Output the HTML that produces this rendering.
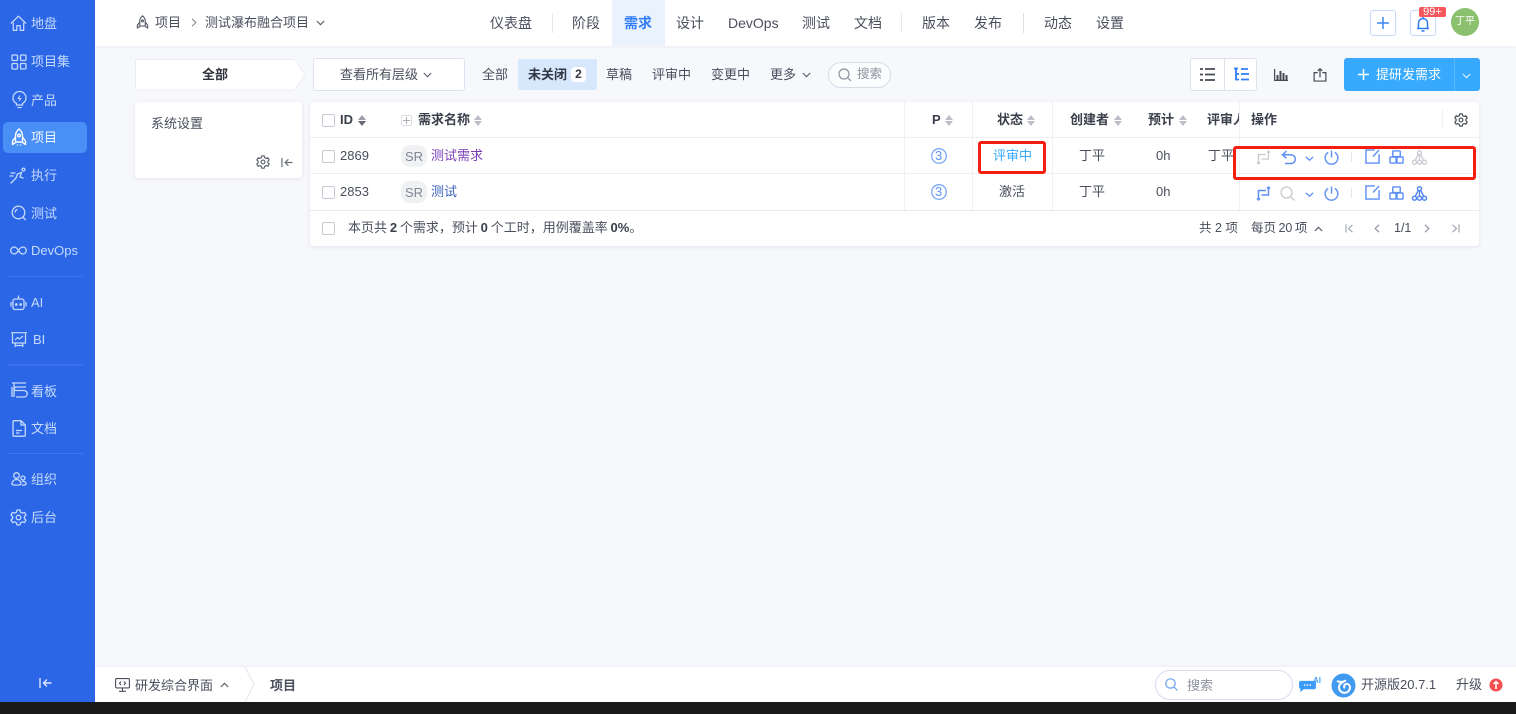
<!DOCTYPE html>
<html lang="zh">
<head>
<meta charset="utf-8">
<title>需求</title>
<style>
html,body{margin:0;padding:0;width:1516px;height:714px;overflow:hidden;background:#f7f8fc}
body{font-family:"Liberation Sans","Noto Sans CJK SC",sans-serif;font-size:13px;color:#4a4f5c}
#w{position:absolute;left:0;top:0;width:1516px;height:714px;overflow:hidden;filter:blur(.3px)}
.a{position:absolute}
.t{position:absolute;white-space:nowrap;line-height:20px;height:20px;margin-top:1px}
.b{font-weight:700;color:#3a3f4b}
.s{color:#c5dafb}
svg{position:absolute;overflow:visible;fill:none}
.cb{position:absolute;width:11px;height:11px;border:1px solid #c6cad3;border-radius:2px;background:#fff}
.sr{position:absolute;width:26px;height:22px;border-radius:9px;background:#f0f1f3;color:#7f8894;text-align:center;line-height:23px;font-size:13px}
.hl{position:absolute;height:1px;background:#eef0f4}
.vl{position:absolute;width:1px;background:#eef0f4}
.sep{position:absolute;height:1px;left:8px;width:75px;background:#4177ea}
.red{position:absolute;border:3px solid #f51c14;border-radius:3px;box-sizing:border-box}
.sort{position:absolute;width:9px;height:11px}
.sort:before,.sort:after{content:"";position:absolute;left:0;border-left:4.5px solid transparent;border-right:4.5px solid transparent}
.sort:before{top:0;border-bottom:5px solid #bcbfc7}
.sort:after{top:6px;border-top:5px solid #bcbfc7}
.sort.d:before{border-bottom-color:#9a9ea8}
.sort.d:after{border-top-color:#666b77}
</style>
</head>
<body>
<div id="w">
<!-- Sidebar -->
<div class="a" style="left:0;top:0;width:95px;height:702px;background:#2b66e6"></div>
<div class="a" style="left:3px;top:122px;width:84px;height:31px;border-radius:5px;background:#4a8ff6"></div>
<div class="sep" style="top:276px"></div><div class="sep" style="top:364px;height:2px;background:#3a71e9"></div><div class="sep" style="top:453px"></div>

<svg style="left:10px;top:15px" width="17" height="17" viewBox="0 0 18 18" stroke="#c5dafb" stroke-width="1.3" stroke-linejoin="round"><path d="M1 9 9 1.300l8 7.700M3.500 8v8.300h3.700v-5h3.600v5h3.700V8"/></svg>
<span class="t s" style="left:31px;top:13px">地盘</span>
<svg style="left:11px;top:54px" width="16" height="16" viewBox="0 0 16 16" stroke="#c5dafb" stroke-width="1.3"><rect x="1" y="1" width="5.500" height="5.500" rx="1"/><rect x="9.500" y="1" width="5.500" height="5.500" rx="1"/><rect x="1" y="9.500" width="5.500" height="5.500" rx="1"/><rect x="9.500" y="9.500" width="5.500" height="5.500" rx="1"/></svg>
<span class="t s" style="left:31px;top:51px">项目集</span>
<svg style="left:12px;top:91px" width="15" height="18" viewBox="0 0 15 18" stroke="#c5dafb" stroke-width="1.3"><path d="M4.500 12.500C2.500 11.300 1 9.500 1 7a6.500 6.500 0 0 1 13 0c0 2.500-1.500 4.300-3.500 5.500v1.500h-6zM5.500 16.500h4"/><path d="M8 4.500 6.200 7.500h2.600L7 10" stroke-width="1"/></svg>
<span class="t s" style="left:31px;top:90px">产品</span>
<svg style="left:11px;top:128px" width="16" height="19" viewBox="0 0 16 19" stroke="#fff" stroke-width="1.4" stroke-linejoin="round"><path d="M8 1c2.500 2 3.500 4.500 3.500 7v6h-7V8c0-2.500 1-5 3.500-7zM4.500 9 1.500 13v3.500l3-2M11.500 9l3 4v3.500l-3-2M6.500 16.500v1M9.500 16.500v1"/><circle cx="8" cy="7.500" r="1.300"/></svg>
<span class="t" style="left:31px;top:127px;color:#f2f6ff">项目</span>
<svg style="left:10px;top:167px" width="17" height="17" viewBox="0 0 17 17" stroke="#c5dafb" stroke-width="1.3"><circle cx="13.500" cy="2.500" r="1.400"/><path d="M1 16 6 11l1.500-4 4-1.500L10 10l3 1M1 6h4M0 9h3" stroke-linecap="round"/></svg>
<span class="t s" style="left:31px;top:165px">执行</span>
<svg style="left:11px;top:205px" width="16" height="16" viewBox="0 0 16 16" stroke="#c5dafb" stroke-width="1.3"><circle cx="7.500" cy="7.500" r="6.300"/><path d="m11.800 12 3 3M4 7.500a3.500 3.500 0 0 1 2.500-3"/></svg>
<span class="t s" style="left:31px;top:203px">测试</span>
<svg style="left:10px;top:246px" width="17" height="9" viewBox="0 0 17 9" stroke="#c5dafb" stroke-width="1.3"><path d="M8.500 4.500C7 2 5.800 1 4.200 1a3.500 3.500 0 0 0 0 7c1.600 0 2.800-1 4.300-3.500C10 2 11.200 1 12.800 1a3.500 3.500 0 0 1 0 7c-1.600 0-2.800-1-4.300-3.500z"/></svg>
<span class="t s" style="left:31px;top:240px">DevOps</span>
<svg style="left:10px;top:294px" width="17" height="17" viewBox="0 0 17 17" stroke="#c5dafb" stroke-width="1.3"><rect x="3" y="5" width="11" height="10.500" rx="2"/><path d="M8.500 5V1.500M1 8v4.500M16 8v4.500"/><circle cx="6.300" cy="10.500" r=".7" fill="#c5dafb"/><circle cx="10.700" cy="10.500" r=".7" fill="#c5dafb"/></svg>
<span class="t s" style="left:31px;top:292px">AI</span>
<svg style="left:11px;top:332px" width="16" height="16" viewBox="0 0 16 16" stroke="#c5dafb" stroke-width="1.2"><path d="M0 .7h16M1.500.7V11h13V.7M4.500 11l-.5 4M11.500 11l.5 4M4 13.500h8M4 8l2.500-2.500 2 1.500L12 4"/></svg>
<span class="t s" style="left:33px;top:329px">BI</span>
<svg style="left:11px;top:382px" width="16" height="16" viewBox="0 0 16 16" stroke="#c5dafb" stroke-width="1.3"><path d="M1 1h14M3 1v14M1 5v10M15 5H5a1.500 1.500 0 0 0 0 3.500h8M13 8.500a2 2 0 0 1 0 6.500H5"/></svg>
<span class="t s" style="left:31px;top:381px">看板</span>
<svg style="left:12px;top:420px" width="14" height="17" viewBox="0 0 14 17" stroke="#c5dafb" stroke-width="1.3"><path d="M1 1.500a.8.800 0 0 1 .8-.8H9l4.300 4.300v10.200a1 1 0 0 1-1 1H1.800a.8.800 0 0 1-.8-.8zM9 .7v4.300h4.300M4 10.500h6M4 13h3.500"/></svg>
<span class="t s" style="left:31px;top:418px">文档</span>
<svg style="left:11px;top:472px" width="16" height="15" viewBox="0 0 16 15" stroke="#c5dafb" stroke-width="1.3"><circle cx="5.500" cy="3.500" r="2.800"/><path d="M1 12c0-2.800 2-4.500 4.500-4.500S10 9.200 10 12c0 1.500-9 1.500-9 0z"/><circle cx="12" cy="6" r="2"/><path d="M11 9.500c2.500-.5 4 .5 4 2.500 0 1-2 1.300-4 1.200"/></svg>
<span class="t s" style="left:31px;top:469px">组织</span>
<svg style="left:10px;top:509px" width="17" height="17" viewBox="0 0 17 17" stroke="#c5dafb" stroke-width="1.3"><path d="M7 1h3l.5 2.200 1.900 1 2.100-.8L16 6l-1.600 1.500v2L16 11l-1.500 2.600-2.100-.8-1.900 1L10 16H7l-.5-2.200-1.900-1-2.100.8L1 11l1.600-1.500v-2L1 6l1.500-2.600 2.100.8 1.900-1z" stroke-linejoin="round"/><circle cx="8.500" cy="8.500" r="2.300"/></svg>
<span class="t s" style="left:31px;top:507px">后台</span>
<svg style="left:39px;top:677px" width="13" height="12" viewBox="0 0 13 12" stroke="#dbe7fd" stroke-width="1.4"><path d="M1 1v10M12.500 6H4.500M8 2.500 4.500 6 8 9.500"/></svg>

<!-- Header -->
<div class="a" style="left:95px;top:0;width:1421px;height:46px;background:#fff;box-shadow:0 1px 3px rgba(30,50,90,.05)"></div>
<svg style="left:136px;top:15px" width="13" height="15" viewBox="0 0 16 19" stroke="#5a5f6b" stroke-width="1.5" stroke-linejoin="round"><path d="M8 1c2.500 2 3.500 4.500 3.500 7v6h-7V8c0-2.500 1-5 3.500-7zM4.500 9 1.500 13v3.500l3-2M11.500 9l3 4v3.500l-3-2"/><circle cx="8" cy="7.500" r="1.200"/></svg>
<span class="t" style="left:155px;top:12px">项目</span>
<svg style="left:191px;top:18px" width="6" height="9" viewBox="0 0 6 9" stroke="#8f949e" stroke-width="1.2"><path d="m1 .8 3.800 3.700L1 8.200"/></svg>
<span class="t" style="left:205px;top:12px">测试瀑布融合项目</span>
<svg style="left:316px;top:20px" width="9" height="6" viewBox="0 0 9 6" stroke="#5a5f6b" stroke-width="1.2"><path d="m.8 1 3.700 3.700L8.200 1"/></svg>

<div class="a" style="left:612px;top:0;width:53px;height:46px;background:#eaf2fe"></div>
<div class="vl" style="left:552px;top:13px;height:20px;background:#e6e8ec"></div>
<div class="vl" style="left:901px;top:13px;height:20px;background:#e6e8ec"></div>
<div class="vl" style="left:1023px;top:13px;height:20px;background:#dcdee3"></div>
<span class="t" style="left:490px;top:12px;font-size:14px">仪表盘</span>
<span class="t" style="left:572px;top:12px;font-size:14px">阶段</span>
<span class="t" style="left:624px;top:12px;font-size:14px;color:#2f7cf6;font-weight:700">需求</span>
<span class="t" style="left:676px;top:12px;font-size:14px">设计</span>
<span class="t" style="left:728px;top:12px;font-size:14px">DevOps</span>
<span class="t" style="left:802px;top:12px;font-size:14px">测试</span>
<span class="t" style="left:854px;top:12px;font-size:14px">文档</span>
<span class="t" style="left:922px;top:12px;font-size:14px">版本</span>
<span class="t" style="left:974px;top:12px;font-size:14px">发布</span>
<span class="t" style="left:1044px;top:12px;font-size:14px">动态</span>
<span class="t" style="left:1096px;top:12px;font-size:14px">设置</span>

<div class="a" style="left:1370px;top:10px;width:24px;height:24px;border:1px solid #c4d9fb;border-radius:3px"></div>
<svg style="left:1377px;top:17px" width="12" height="12" viewBox="0 0 13 13" stroke="#3d86f5" stroke-width="1.6"><path d="M6.500 0v13M0 6.500h13"/></svg>
<div class="a" style="left:1410px;top:10px;width:24px;height:24px;border:1px solid #c4d9fb;border-radius:3px"></div>
<svg style="left:1416px;top:16px" width="14" height="16" viewBox="0 0 14 16" stroke="#2f7cf6" stroke-width="1.5"><path d="M1 12.500h12M2.500 12.500V7a4.500 4.500 0 0 1 9 0v5.500M5.500 15h3M7 1v1.500"/></svg>
<div class="a" style="left:1419px;top:7px;width:27px;height:10px;background:#f4565c;border-radius:2px;color:#fff;font-size:11px;line-height:10px;text-align:center">99+</div>
<div class="a" style="left:1451px;top:8px;width:28px;height:28px;border-radius:50%;background:#8bc06f;color:#fff;font-size:10px;line-height:27px;text-align:center">丁平</div>

<!-- Toolbar -->
<svg style="left:135px;top:59px" width="171" height="32" viewBox="0 0 171 32"><path d="M1.500 .5h158L170 15.500 159.500 31H1.500a1 1 0 0 1-1-1V1.500a1 1 0 0 1 1-1z" fill="#fff" stroke="#eceef4"/></svg>
<span class="t" style="left:202px;top:64px;color:#2e323b;font-weight:700">全部</span>
<div class="a" style="left:313px;top:58px;width:150px;height:31px;background:#fff;border:1.500px solid #dfe2ee;border-radius:3px"></div>
<span class="t" style="left:340px;top:64px">查看所有层级</span>
<svg style="left:423px;top:72px" width="9" height="6" viewBox="0 0 9 6" stroke="#5a5f6b" stroke-width="1.100"><path d="m.8 1 3.700 3.700L8.200 1"/></svg>
<span class="t" style="left:482px;top:64px">全部</span>
<div class="a" style="left:518px;top:59px;width:79px;height:31px;background:#d7e8fd;border-radius:2px"></div>
<span class="t" style="left:528px;top:64px;color:#333844;font-weight:700">未关闭</span>
<div class="a" style="left:571px;top:67px;width:15px;height:15px;background:#fff;border-radius:4px;text-align:center;line-height:15px;font-size:12px;font-weight:700;color:#333844">2</div>
<span class="t" style="left:606px;top:64px">草稿</span>
<span class="t" style="left:652px;top:64px">评审中</span>
<span class="t" style="left:711px;top:64px">变更中</span>
<span class="t" style="left:770px;top:64px">更多</span>
<svg style="left:802px;top:72px" width="9" height="6" viewBox="0 0 9 6" stroke="#5a5f6b" stroke-width="1.100"><path d="m.8 1 3.700 3.700L8.200 1"/></svg>
<div class="a" style="left:828px;top:62px;width:61px;height:24px;background:#fbfcfe;border:1px solid #d8dbe6;border-radius:13px"></div>
<svg style="left:838px;top:68px" width="14" height="14" viewBox="0 0 14 14" stroke="#8d929c" stroke-width="1.200"><circle cx="6" cy="6" r="5"/><path d="m9.800 9.800 3.200 3.200"/></svg>
<span class="t" style="left:857px;top:63px;font-size:12.500px;color:#8f949e">搜索</span>

<div class="a" style="left:1190px;top:58px;width:65px;height:31px;background:#fff;border:1.500px solid #dfe2ec;border-radius:3px"></div>
<div class="vl" style="left:1224px;top:59px;height:32px;background:#dfe2ec"></div>
<svg style="left:1200px;top:68px" width="15" height="13" viewBox="0 0 15 13" stroke="#454a55" stroke-width="1.800"><path d="M0 1h3M5 1h10M0 6.500h3M5 6.500h10M0 12h3M5 12h10"/></svg>
<svg style="left:1234px;top:67px" width="15" height="15" viewBox="0 0 15 15" stroke="#2f7cf6" stroke-width="1.800"><path d="M0 1.500h4M2 1.500V12.500H5M2 7h3M7 2h7M7 7h8M7 12.500h8"/></svg>
<svg style="left:1274px;top:69px" width="14" height="12" viewBox="0 0 14 12"><path fill="#454a55" d="M0 0h1.200v11H0zM2.500 6h2v5h-2zM5.500 2h2v9h-2zM8.500 4h2v7h-2zM11.500 6h2v5h-2zM0 10.800h14V12H0z"/></svg>
<svg style="left:1313px;top:68px" width="14" height="14" viewBox="0 0 14 15" stroke="#454a55" stroke-width="1.300"><path d="M4.500 5H.7v9h12.600V5H9.500M7 10V1M4.500 3 7 .8 9.500 3"/></svg>
<div class="a" style="left:1344px;top:58px;width:136px;height:33px;background:#37aaff;border-radius:3px"></div>
<div class="vl" style="left:1454px;top:58px;height:33px;background:#5bb9fd"></div>
<svg style="left:1358px;top:69px" width="11" height="11" viewBox="0 0 11 11" stroke="#fff" stroke-width="1.500"><path d="M5.500 0v11M0 5.500h11"/></svg>
<span class="t" style="left:1376px;top:64px;color:#fff;font-size:13px">提研发需求</span>
<svg style="left:1462px;top:73px" width="9" height="6" viewBox="0 0 9 6" stroke="#dff1ff" stroke-width="1.100"><path d="m.8 1 3.700 3.700L8.200 1"/></svg>

<!-- Left panel -->
<div class="a" style="left:135px;top:102px;width:167px;height:76px;background:#fff;border-radius:3px;box-shadow:0 1px 3px rgba(30,50,90,.1)"></div>
<span class="t" style="left:151px;top:113px">系统设置</span>
<svg style="left:256px;top:155px" width="14" height="14" viewBox="0 0 17 17" stroke="#5a5f6b" stroke-width="1.400"><path d="M7 1h3l.5 2.200 1.900 1 2.100-.8L16 6l-1.600 1.500v2L16 11l-1.500 2.600-2.100-.8-1.900 1L10 16H7l-.5-2.200-1.900-1-2.100.8L1 11l1.600-1.500v-2L1 6l1.500-2.600 2.100.8 1.900-1z" stroke-linejoin="round"/><circle cx="8.500" cy="8.500" r="2.300"/></svg>
<svg style="left:281px;top:157px" width="12" height="11" viewBox="0 0 13 12" stroke="#6a6f7a" stroke-width="1.300"><path d="M1 1v10M12.500 6H4.500M8 2.500 4.500 6 8 9.500"/></svg>

<!-- Table -->
<div class="a" style="left:310px;top:102px;width:1169px;height:144px;background:#fff;border-radius:3px;box-shadow:0 1px 3px rgba(30,50,90,.1)"></div>
<div class="hl" style="left:310px;top:137px;width:1169px"></div>
<div class="hl" style="left:310px;top:173px;width:1169px"></div>
<div class="hl" style="left:310px;top:210px;width:1169px;background:#e8eaef"></div>
<div class="vl" style="left:904px;top:102px;height:108px"></div>
<div class="vl" style="left:972px;top:102px;height:108px"></div>
<div class="vl" style="left:1052px;top:102px;height:108px"></div>
<div class="vl" style="left:1239px;top:102px;height:108px"></div>
<div class="vl" style="left:1442px;top:109px;height:21px"></div>

<div class="cb" style="left:322px;top:114px"></div>
<span class="t b" style="left:340px;top:109px">ID</span>
<div class="sort d" style="left:358px;top:115px"></div>
<div class="a" style="left:401px;top:115px;width:9px;height:9px;border:1px solid #dcdfe4;border-radius:2px"></div>
<svg style="left:403px;top:117px" width="7" height="7" viewBox="0 0 7 7" stroke="#a9adb5"><path d="M3.500 0v7M0 3.500h7"/></svg>
<span class="t b" style="left:418px;top:109px">需求名称</span>
<div class="sort" style="left:474px;top:115px"></div>
<span class="t b" style="left:932px;top:109px">P</span>
<div class="sort" style="left:945px;top:115px"></div>
<span class="t b" style="left:997px;top:109px">状态</span>
<div class="sort" style="left:1027px;top:115px"></div>
<span class="t b" style="left:1070px;top:109px">创建者</span>
<div class="sort" style="left:1114px;top:115px"></div>
<span class="t b" style="left:1148px;top:109px">预计</span>
<div class="sort" style="left:1179px;top:115px"></div>
<div class="a" style="left:1207px;top:105px;width:32px;height:30px;overflow:hidden"><span class="t b" style="left:0;top:4px">评审人</span></div>
<span class="t b" style="left:1251px;top:109px">操作</span>
<svg style="left:1454px;top:113px" width="14" height="14" viewBox="0 0 17 17" stroke="#454a55" stroke-width="1.400"><path d="M7 1h3l.5 2.200 1.900 1 2.100-.8L16 6l-1.600 1.500v2L16 11l-1.500 2.600-2.100-.8-1.900 1L10 16H7l-.5-2.200-1.900-1-2.100.8L1 11l1.600-1.500v-2L1 6l1.500-2.600 2.100.8 1.900-1z" stroke-linejoin="round"/><circle cx="8.500" cy="8.500" r="2.300"/></svg>

<!-- Row 1 -->
<div class="cb" style="left:322px;top:150px"></div>
<span class="t" style="left:340px;top:145px">2869</span>
<div class="sr" style="left:401px;top:145px">SR</div>
<span class="t" style="left:431px;top:145px;color:#7a3db8">测试需求</span>
<svg style="left:931px;top:148px" width="16" height="16" viewBox="0 0 16 16"><circle cx="8" cy="8" r="7.300" stroke="#7aa8f5" stroke-width="1.300"/></svg>
<span class="t" style="left:935px;top:145px;font-size:13px;color:#5b93f3">3</span>
<span class="t" style="left:993px;top:145px;color:#37aaff">评审中</span>
<span class="t" style="left:1079px;top:145px">丁平</span>
<span class="t" style="left:1156px;top:145px">0h</span>
<span class="t" style="left:1208px;top:145px">丁平</span>

<!-- Row 2 -->
<div class="cb" style="left:322px;top:186px"></div>
<span class="t" style="left:340px;top:181px">2853</span>
<div class="sr" style="left:401px;top:181px">SR</div>
<span class="t" style="left:431px;top:181px;color:#3c64bd">测试</span>
<svg style="left:931px;top:184px" width="16" height="16" viewBox="0 0 16 16"><circle cx="8" cy="8" r="7.300" stroke="#7aa8f5" stroke-width="1.300"/></svg>
<span class="t" style="left:935px;top:181px;font-size:13px;color:#5b93f3">3</span>
<span class="t" style="left:999px;top:181px">激活</span>
<span class="t" style="left:1079px;top:181px">丁平</span>
<span class="t" style="left:1156px;top:181px">0h</span>

<!-- Actions row 1 -->
<svg style="left:1256px;top:150px" width="15" height="15" viewBox="0 0 15 15" stroke="#c8cad0" stroke-width="1.300"><path d="M12.500 1v8H5.500M2.500 14V4.500H10M1 12.500 2.500 14 4 12.500M11 2.500 12.500 1 14 2.500"/></svg>
<svg style="left:1281px;top:150px" width="16" height="15" viewBox="0 0 16 15" stroke="#5c8ef5" stroke-width="1.500"><path d="M5.500 1 1.500 4.800l4 3.500M1.500 4.800H10a4.300 4.300 0 0 1 0 8.700H4"/></svg>
<svg style="left:1305px;top:156px" width="9" height="5" viewBox="0 0 9 5" stroke="#5c8ef5" stroke-width="1.300"><path d="m.8.800 3.700 3.400L8.200.8"/></svg>
<svg style="left:1324px;top:150px" width="15" height="15" viewBox="0 0 16 16" stroke="#5c8ef5" stroke-width="1.500"><path d="M4.500 2.500a6.800 6.800 0 1 0 7 0M8 .5V8"/></svg>
<div class="vl" style="left:1351px;top:152px;height:10px;background:#e4e6ea"></div>
<svg style="left:1365px;top:149px" width="15" height="15" viewBox="0 0 16 16" stroke="#5c8ef5" stroke-width="1.500"><path d="M10.500 1H1v14h14V5.500M15 1 8.500 8"/></svg>
<svg style="left:1389px;top:150px" width="15" height="14" viewBox="0 0 16 15" stroke="#5c8ef5" stroke-width="1.500"><rect x="4" y="1" width="8" height="6" rx=".8"/><rect x="1" y="7.500" width="6.500" height="6.500" rx=".8"/><rect x="8.500" y="7.500" width="6.500" height="6.500" rx=".8"/></svg>
<svg style="left:1412px;top:150px" width="15" height="15" viewBox="0 0 15 15" stroke="#c8cad0" stroke-width="1.300"><circle cx="7.500" cy="2.700" r="2"/><circle cx="2.500" cy="12.200" r="2"/><circle cx="7.500" cy="12.200" r="2"/><circle cx="12.500" cy="12.200" r="2"/><path d="M7.500 4.700v5.500M6.300 4.300 3.300 10.300M8.700 4.300l3 6"/></svg>

<!-- Actions row 2 -->
<svg style="left:1256px;top:186px" width="15" height="15" viewBox="0 0 15 15" stroke="#5c8ef5" stroke-width="1.500"><path d="M12.500 1v8H5.500M2.500 14V4.500H10M1 12.500 2.500 14 4 12.500M11 2.500 12.500 1 14 2.500"/></svg>
<svg style="left:1280px;top:186px" width="15" height="15" viewBox="0 0 15 15" stroke="#c8cad0" stroke-width="1.300"><circle cx="6.500" cy="6.500" r="5.500"/><path d="m10.500 10.500 4 4"/></svg>
<svg style="left:1305px;top:192px" width="9" height="5" viewBox="0 0 9 5" stroke="#5c8ef5" stroke-width="1.300"><path d="m.8.800 3.700 3.400L8.200.8"/></svg>
<svg style="left:1324px;top:186px" width="15" height="15" viewBox="0 0 16 16" stroke="#5c8ef5" stroke-width="1.500"><path d="M4.500 2.500a6.800 6.800 0 1 0 7 0M8 .5V8"/></svg>
<div class="vl" style="left:1351px;top:188px;height:10px;background:#e4e6ea"></div>
<svg style="left:1365px;top:185px" width="15" height="15" viewBox="0 0 16 16" stroke="#5c8ef5" stroke-width="1.500"><path d="M10.500 1H1v14h14V5.500M15 1 8.500 8"/></svg>
<svg style="left:1389px;top:186px" width="15" height="14" viewBox="0 0 16 15" stroke="#5c8ef5" stroke-width="1.500"><rect x="4" y="1" width="8" height="6" rx=".8"/><rect x="1" y="7.500" width="6.500" height="6.500" rx=".8"/><rect x="8.500" y="7.500" width="6.500" height="6.500" rx=".8"/></svg>
<svg style="left:1412px;top:186px" width="15" height="15" viewBox="0 0 15 15" stroke="#4f84f3" stroke-width="1.400"><circle cx="7.500" cy="2.700" r="2"/><circle cx="2.500" cy="12.200" r="2"/><circle cx="7.500" cy="12.200" r="2"/><circle cx="12.500" cy="12.200" r="2"/><path d="M7.500 4.700v5.500M6.300 4.300 3.300 10.300M8.700 4.300l3 6"/></svg>

<!-- Table footer -->
<div class="cb" style="left:322px;top:222px"></div>
<span class="t" style="left:348px;top:217px;word-spacing:-.8px">本页共 <b style="color:#3a3f4b">2</b> 个需求，预计 <b style="color:#3a3f4b">0</b> 个工时，用例覆盖率 <b style="color:#3a3f4b">0%</b>。</span>
<span class="t" style="left:1199px;top:217px;font-size:12.500px">共 2 项</span>
<span class="t" style="left:1251px;top:217px;font-size:12.500px;word-spacing:-1px">每页 20 项</span>
<svg style="left:1314px;top:226px" width="9" height="6" viewBox="0 0 9 6" stroke="#5a5f6b" stroke-width="1.200"><path d="m.8 5 3.700-3.700L8.200 5"/></svg>
<svg style="left:1345px;top:224px" width="9" height="9" viewBox="0 0 9 9" stroke="#a5a9b2" stroke-width="1.200"><path d="M1 .5v8M7.500.8 3.500 4.500l4 3.700"/></svg>
<svg style="left:1374px;top:224px" width="6" height="9" viewBox="0 0 6 9" stroke="#8f949e" stroke-width="1.200"><path d="M5 .8 1.200 4.500 5 8.200"/></svg>
<span class="t" style="left:1394px;top:217px;font-size:12.500px">1/1</span>
<svg style="left:1424px;top:224px" width="6" height="9" viewBox="0 0 6 9" stroke="#8f949e" stroke-width="1.200"><path d="m1 .8 3.800 3.700L1 8.200"/></svg>
<svg style="left:1451px;top:224px" width="9" height="9" viewBox="0 0 9 9" stroke="#a5a9b2" stroke-width="1.200"><path d="M8 .5v8M1.500.8l4 3.700-4 3.700"/></svg>

<!-- Red annotations -->
<div class="red" style="left:978px;top:141px;width:68px;height:33px"></div>
<div class="red" style="left:1233px;top:146px;width:243px;height:34px"></div>

<!-- Footer bar -->
<div class="a" style="left:95px;top:667px;width:1421px;height:35px;background:#fff;box-shadow:0 -1px 2px rgba(30,50,90,.05)"></div>
<svg style="left:115px;top:678px" width="15" height="14" viewBox="0 0 15 14" stroke="#4a4f5c" stroke-width="1.100"><rect x=".6" y=".6" width="13.800" height="9.300" rx="1"/><path d="M7.500 10v3M4 13.300h7M6 3.500 4.500 5.200 6 7M9 3.500l1.500 1.700L9 7"/></svg>
<span class="t" style="left:135px;top:675px">研发综合界面</span>
<svg style="left:220px;top:682px" width="9" height="6" viewBox="0 0 9 6" stroke="#5a5f6b" stroke-width="1.200"><path d="m.8 5 3.700-3.700L8.200 5"/></svg>
<svg style="left:244px;top:667px" width="11" height="35" viewBox="0 0 11 35" stroke="#e4e6ec"><path d="m1 0 9 17.500L1 35"/></svg>
<span class="t b" style="left:270px;top:675px;color:#4a4f5c">项目</span>

<div class="a" style="left:1155px;top:670px;width:136px;height:28px;background:#fff;border:1px solid #d8dcee;border-radius:15px"></div>
<svg style="left:1165px;top:678px" width="13" height="13" viewBox="0 0 13 13" stroke="#6aa2f2" stroke-width="1.200"><circle cx="5.500" cy="5.500" r="4.700"/><path d="m9 9 3.500 3.500"/></svg>
<span class="t" style="left:1187px;top:675px;color:#8f949e">搜索</span>
<svg style="left:1299px;top:678px" width="17" height="15" viewBox="0 0 18 16"><path d="M2 3h14a2 2 0 0 1 2 2v5a2 2 0 0 1-2 2H5l-4 3 .5-3.500A2 2 0 0 1 0 10V5a2 2 0 0 1 2-2z" fill="#3d9bf7"/><circle cx="6" cy="7.500" r=".9" fill="#fff"/><circle cx="9" cy="7.500" r=".9" fill="#fff"/><circle cx="12" cy="7.500" r=".9" fill="#fff"/></svg>
<span class="a" style="left:1313px;top:677px;font-size:8px;line-height:8px;font-weight:700;color:#4ba3f7">AI</span>
<svg style="left:1331px;top:673px" width="25" height="25" viewBox="0 0 25 25"><circle cx="12.500" cy="12.500" r="12" fill="#3f9af0"/><path d="M6 8c3 1.500 6 1 9-.5M12.500 9a5.500 5.500 0 1 0 6.500 5.500c0-2.500-2-4-4-3.500s-2.500 3-1 4" stroke="#fff" stroke-width="2"/></svg>
<span class="t" style="left:1361px;top:674px">开源版20.7.1</span>
<span class="t" style="left:1456px;top:674px">升级</span>
<svg style="left:1489px;top:678px" width="14" height="14" viewBox="0 0 14 14"><circle cx="7" cy="7" r="6.500" fill="#f5504f"/><path d="M7 11V4M4.500 6 7 3.500 9.500 6" stroke="#fff" stroke-width="1.500"/></svg>

<!-- Bottom strip -->
<div class="a" style="left:0;top:702px;width:1516px;height:12px;background:#1a1a1a"></div>
</div>
</body>
</html>
